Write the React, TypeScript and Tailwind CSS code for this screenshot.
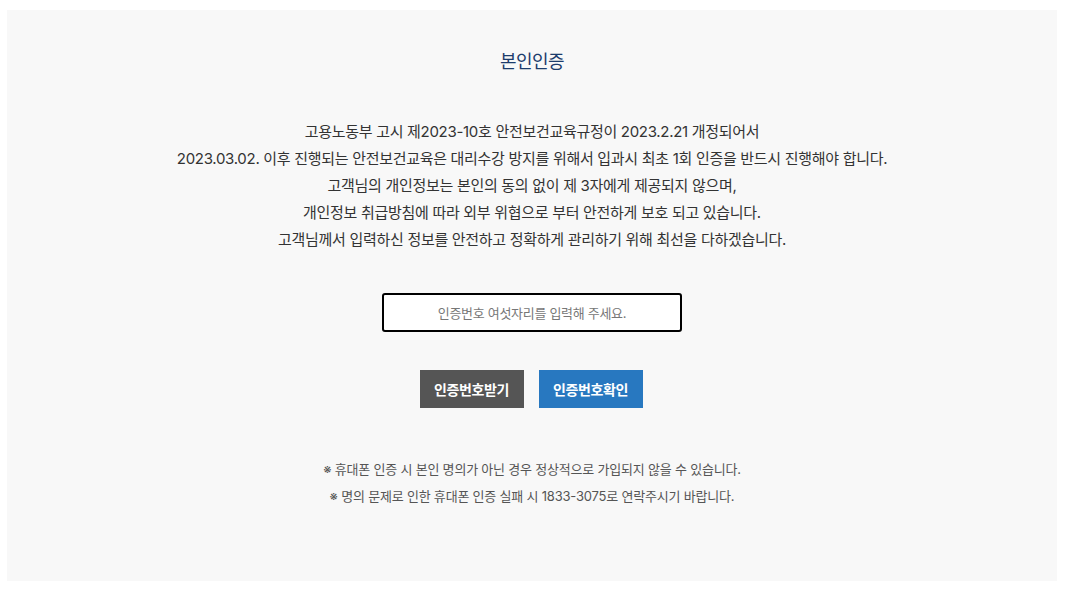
import React from "react";

const FONT = "font-['Inter','Noto_Sans_CJK_KR',sans-serif]";

export default function App() {
  return (
    <div className={`min-h-[589px] bg-white px-[7px] pt-[10px] ${FONT}`}>
      <div className="flex h-[571px] w-[1050px] flex-col items-center bg-[#f8f8f8]">
        {/* 제목 */}
        <h2 className="mt-[40px] text-[18px] leading-[24px] font-normal tracking-[-0.5px] text-[#1c3c6c]">
          본인인증
        </h2>

        {/* 안내문 */}
        <div className="mt-[44px] text-center text-[15px] leading-[27px] tracking-[-0.3px] text-[#333]">
          <p>고용노동부 고시 제2023-10호 안전보건교육규정이 2023.2.21 개정되어서</p>
          <p>
            2023.03.02. 이후 진행되는 안전보건교육은 대리수강 방지를 위해서 입과시 최초 1회 인증을 반드시 진행해야 합니다.
          </p>
          <p>고객님의 개인정보는 본인의 동의 없이 제 3자에게 제공되지 않으며,</p>
          <p>개인정보 취급방침에 따라 외부 위협으로 부터 안전하게 보호 되고 있습니다.</p>
          <p>고객님께서 입력하신 정보를 안전하고 정확하게 관리하기 위해 최선을 다하겠습니다.</p>
        </div>

        {/* 인증번호 입력 */}
        <input
          type="text"
          placeholder="인증번호 여섯자리를 입력해 주세요."
          className="mt-[40px] h-[39px] w-[300px] rounded-[3px] border-2 border-black bg-white text-center text-[13px] tracking-[-0.3px] text-[#333] outline-none placeholder:text-[#777]"
        />

        {/* 버튼 */}
        <div className="mt-[38px] flex gap-[15px] pr-[2px]">
          <button className="h-[38px] w-[104px] bg-[#555] text-[14px] font-bold tracking-[-0.4px] text-white">
            인증번호받기
          </button>
          <button className="h-[38px] w-[104px] bg-[#2878c0] text-[14px] font-bold tracking-[-0.4px] text-white">
            인증번호확인
          </button>
        </div>

        {/* 주의사항 */}
        <div className="mt-[48px] text-center text-[13px] leading-[27px] tracking-[-0.2px] text-[#555]">
          <p>※ 휴대폰 인증 시 본인 명의가 아닌 경우 정상적으로 가입되지 않을 수 있습니다.</p>
          <p>※ 명의 문제로 인한 휴대폰 인증 실패 시 1833-3075로 연락주시기 바랍니다.</p>
        </div>
      </div>
    </div>
  );
}
